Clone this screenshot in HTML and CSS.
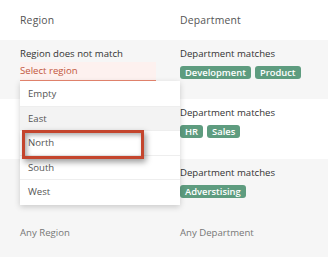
FILE: index.html
```html
<!DOCTYPE html>
<html>
<head lang="en">
    <meta charset="UTF-8">
    <title>Rules</title>
    <link rel="stylesheet" href="styles.css">
</head>
<body>
<div class="table">
    <div class="row head">
        <div class="cell">Region</div>
        <div class="cell">Department</div>
    </div>
    <div class="row gray">
        <div class="cell region">
            <div class="line">Region does not match</div>
            <div class="select">Select region</div>
            <ul class="menu">
                <li>Empty</li>
                <li class="hover">East</li>
                <li>North</li>
                <li>South</li>
                <li>West</li>
            </ul>
            <div class="mark"></div>
        </div>
        <div class="cell">
            <div class="line">Department matches</div>
            <div class="tags"><span class="tag">Development</span><span class="tag">Product</span></div>
        </div>
    </div>
    <div class="row">
        <div class="cell"></div>
        <div class="cell">
            <div class="line">Department matches</div>
            <div class="tags"><span class="tag">HR</span><span class="tag">Sales</span></div>
        </div>
    </div>
    <div class="row gray">
        <div class="cell"></div>
        <div class="cell">
            <div class="line">Department matches</div>
            <div class="tags"><span class="tag">Adverstising</span></div>
        </div>
    </div>
    <div class="row gray last">
        <div class="cell muted">Any Region</div>
        <div class="cell muted">Any Department</div>
    </div>
</div>
</body>
</html>
```

FILE: styles.css
```css
*{
    margin: 0;
    padding: 0;
    box-sizing: border-box;
}
ul{
    list-style: none;
}
body{
    font-family: "Open Sans", "Liberation Sans", sans-serif;
    font-size: 9.6px;
    color: #333;
    background: #f6f6f6;
    width: 328px;
    height: 257px;
    overflow: hidden;
}
.table{
    width: 328px;
}
.row{
    display: grid;
    grid-template-columns: 160px 1fr;
    padding: 6px 20px 0;
    height: 60px;
    background: #fff;
    line-height: 15px;
}
.row.gray{
    background: #f6f6f6;
}
.row.head{
    height: 40px;
    padding-top: 13px;
    font-size: 10.4px;
    letter-spacing: 0.2px;
    color: #555;
    background: #fff;
}
.row.gray:nth-child(2){
    height: 59px;
}
.row.last{
    height: 38px;
}
.muted{
    color: #777;
}
.region{
    position: relative;
}
.line{
    height: 15px;
}
.select{
    width: 136px;
    height: 19px;
    margin-top: 1px;
    background: #fdf1ef;
    border-bottom: 1px solid #e8866f;
    color: #c2573d;
    line-height: 17px;
}
.tags{
    display: flex;
    gap: 4px;
    margin-top: 5px;
}
.tag{
    background: #5e9c7f;
    color: #fff;
    font-weight: 600;
    font-size: 9.4px;
    line-height: 13px;
    padding: 0 5px;
    border-radius: 3px;
}
.menu{
    position: absolute;
    left: 0;
    top: 35px;
    width: 160px;
    background: #fff;
    box-shadow: 0 2px 6px rgba(0,0,0,0.18);
    z-index: 2;
    padding-top: 1px;
}
.menu li{
    height: 24.5px;
    line-height: 24px;
    padding-left: 8px;
    color: #555;
    border-bottom: 1px solid #eee;
}
.menu li:last-child{
    border-bottom: 0;
}
.menu .hover{
    background: #f3f3f3;
}
.mark{
    position: absolute;
    left: 2px;
    top: 84px;
    width: 122px;
    height: 29px;
    border: 3px solid #c4452d;
    box-shadow: 2px 3px 6px rgba(0,0,0,0.4), inset 2px 2px 5px rgba(0,0,0,0.35);
    z-index: 3;
}
```
